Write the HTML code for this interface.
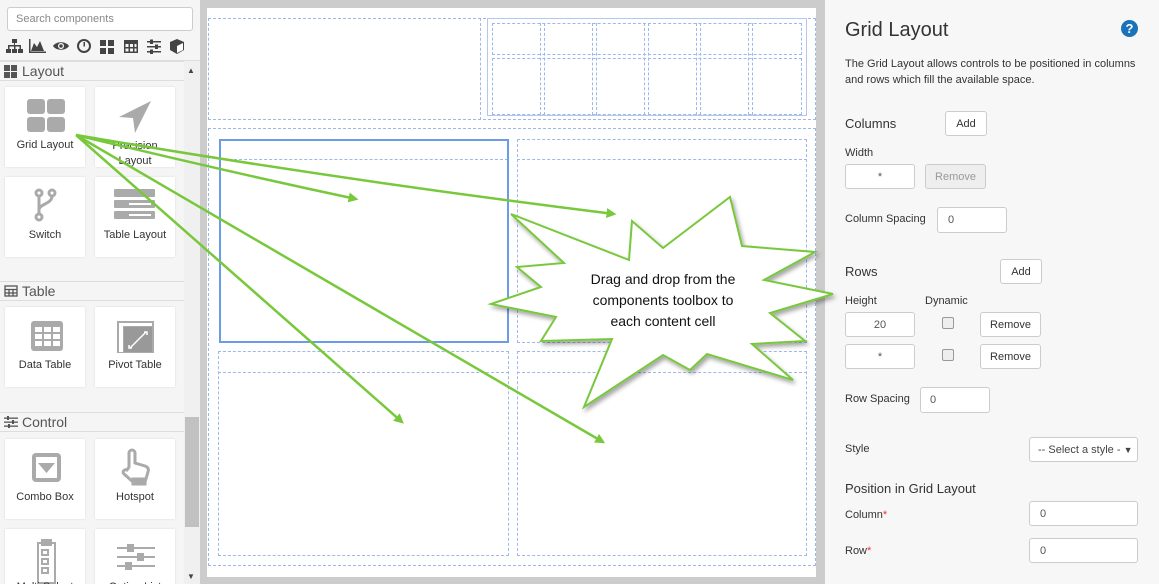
<!DOCTYPE html>
<html style="width:1159px;height:584px;overflow:hidden"><head><meta charset="utf-8"><style>
*{box-sizing:border-box;margin:0;padding:0}
body{width:1159px;height:584px;overflow:hidden;position:relative;font-family:"Liberation Sans",sans-serif;background:#f5f5f5;color:#333}
.abs{position:absolute}
.tile{position:absolute;width:80px;height:80px;background:#fff;box-shadow:0 0 2px rgba(0,0,0,.12);font-size:11px;text-align:center;color:#333;overflow:hidden}
.tile .lb{position:absolute;left:0;right:0}
.hdr{position:absolute;left:0;width:184px;height:20px;border-top:1px solid #ddd;border-bottom:1px solid #ddd;font-size:14px;color:#555;padding-left:22px;line-height:18px}
.d{position:absolute;border:1px dashed #9db8ea}
.rp{font-size:11px;color:#333}
.inp{position:absolute;background:#fff;border:1px solid #ccc;border-radius:3px;font-size:11px;color:#555;display:flex;align-items:center}
.btn{position:absolute;background:#fff;border:1px solid #ccc;border-radius:3px;font-size:11px;display:flex;align-items:center;justify-content:center;color:#333}
.cb{position:absolute;width:12px;height:12px;border:1px solid #999;border-radius:2px;background:#eee}
</style></head><body>
<!-- left panel -->
<div class="abs" style="left:7px;top:7px;width:186px;height:24px;background:#fff;border:1px solid #ccc;border-radius:3px;font-size:11px;color:#888;padding-left:8px;line-height:22px">Search components</div>
<svg class="abs" style="left:0;top:36px" width="200" height="22" fill="#444">
<rect x="12" y="3" width="5" height="4"/><rect x="14" y="7" width="1" height="3"/><rect x="8" y="9" width="13" height="1.5"/><rect x="8" y="9" width="1.5" height="4"/><rect x="14" y="9" width="1.5" height="4"/><rect x="19.5" y="9" width="1.5" height="4"/><rect x="6" y="13" width="5" height="4"/><rect x="12" y="13" width="5" height="4"/><rect x="18" y="13" width="5" height="4"/>
<path d="M29 3v14h17v-1.5H30.5V3z"/><path d="M31 15l3-8 3 4 3-6 4 10z"/>
<path d="M53 10c3-5 13-5 16 0-3 5-13 5-16 0z"/><circle cx="61" cy="10" r="3" fill="#fff"/><circle cx="61" cy="10" r="1.8"/>
<circle cx="84" cy="10" r="6" fill="none" stroke="#444" stroke-width="2"/><path d="M83.5 6h1.5v4.5h-1.5z"/>
<rect x="100" y="4" width="6" height="6"/><rect x="108" y="4" width="6" height="6"/><rect x="100" y="12" width="6" height="6"/><rect x="108" y="12" width="6" height="6"/>
<path d="M124 4h14v13h-14zM125.5 8v3h3v-3zm4.5 0v3h3v-3zm4.5 0v3h2v-3zM125.5 12.5v3h3v-3zm4.5 0v3h3v-3zm4.5 0v3h2v-3z" fill-rule="evenodd"/>
<path d="M147 5h14v1.5h-14zM147 10h14v1.5h-14zM147 15h14v1.5h-14z"/><rect x="150" y="3.5" width="3" height="4.5"/><rect x="155" y="8.5" width="3" height="4.5"/><rect x="150" y="13.5" width="3" height="4.5"/>
<path d="M177 3l7 3v8l-7 4-7-4V6z"/><path d="M177 10l6-3v7l-6 3z" fill="#fff"/>
</svg>
<div class="abs" style="left:0;top:60px;width:200px;height:1px;background:#ddd"></div>
<div class="abs" style="left:184px;top:61px;width:16px;height:523px;background:#f0f0f0"></div>
<div class="abs" style="left:185px;top:417px;width:14px;height:110px;background:#c1c1c1"></div>
<div class="abs" style="left:187px;top:66px;font-size:8px;color:#444">▲</div>
<div class="abs" style="left:187px;top:572px;font-size:8px;color:#444">▼</div>

<div class="hdr" style="top:61px">Layout</div>
<svg class="abs" style="left:4px;top:65px" width="13" height="13" fill="#555"><rect x="0" y="0" width="6" height="6"/><rect x="7" y="0" width="6" height="6"/><rect x="0" y="7" width="6" height="6"/><rect x="7" y="7" width="6" height="6"/></svg>
<div class="tile" style="left:5px;top:87px"><svg class="abs" style="left:21px;top:12px" width="40" height="34" fill="#aaa"><rect x="1" y="0" width="18" height="15" rx="3"/><rect x="21" y="0" width="18" height="15" rx="3"/><rect x="1" y="18" width="18" height="15" rx="3"/><rect x="21" y="18" width="18" height="15" rx="3"/></svg><div class="lb" style="top:52px">Grid Layout</div></div>
<div class="tile" style="left:95px;top:87px"><svg class="abs" style="left:20px;top:12px" width="40" height="36" fill="#aaa"><path d="M36 2L4 18l14 1 2 15z"/></svg><div class="lb" style="top:52px;line-height:15px">Precision<br>Layout</div></div>
<div class="tile" style="left:5px;top:177px"><svg class="abs" style="left:25px;top:10px" width="30" height="36" fill="none" stroke="#aaa" stroke-width="3"><circle cx="9" cy="6" r="3"/><circle cx="22" cy="6" r="3"/><circle cx="9" cy="30" r="3"/><path d="M9 9v18M22 9c0 8-13 8-13 14"/></svg><div class="lb" style="top:52px">Switch</div></div>
<div class="tile" style="left:95px;top:177px"><svg class="abs" style="left:19px;top:12px" width="42" height="32" fill="#aaa"><rect x="0" y="0" width="41" height="8" rx="1"/><rect x="0" y="11" width="41" height="8" rx="1"/><rect x="0" y="22" width="41" height="8" rx="1"/><rect x="15" y="14" width="22" height="2" fill="#fff"/><rect x="15" y="25" width="22" height="2" fill="#fff"/></svg><div class="lb" style="top:52px">Table Layout</div></div>

<div class="hdr" style="top:281px">Table</div>
<svg class="abs" style="left:4px;top:285px" width="14" height="12" fill="none" stroke="#555" stroke-width="1.3"><rect x="1" y="1" width="12" height="10"/><path d="M1 4.5h12M1 8h12M5 4.5v6.5M9 4.5v6.5"/></svg>
<div class="tile" style="left:5px;top:307px"><svg class="abs" style="left:21px;top:12px" width="40" height="34"><rect x="5" y="2" width="32" height="30" rx="3" fill="#aaa"/><g fill="#fff"><rect x="9" y="8" width="7" height="5"/><rect x="18" y="8" width="7" height="5"/><rect x="27" y="8" width="7" height="5"/><rect x="9" y="15" width="7" height="5"/><rect x="18" y="15" width="7" height="5"/><rect x="27" y="15" width="7" height="5"/><rect x="9" y="22" width="7" height="5"/><rect x="18" y="22" width="7" height="5"/><rect x="27" y="22" width="7" height="5"/></g></svg><div class="lb" style="top:52px">Data Table</div></div>
<div class="tile" style="left:95px;top:307px"><svg class="abs" style="left:21px;top:12px" width="40" height="34"><rect x="1" y="2" width="37" height="33" fill="#aaa"/><rect x="3" y="4" width="33" height="3" fill="#fff"/><rect x="3" y="4" width="4" height="29" fill="#fff"/><rect x="8" y="8" width="28" height="25" fill="#999"/><path d="M14 29l16-16M28 13h3v3M13 26v3h3" stroke="#fff" stroke-width="1.5" fill="none"/></svg><div class="lb" style="top:52px">Pivot Table</div></div>

<div class="hdr" style="top:412px">Control</div>
<svg class="abs" style="left:4px;top:416px" width="14" height="12" fill="#555"><rect x="0" y="1.5" width="14" height="1.3"/><rect x="0" y="5.5" width="14" height="1.3"/><rect x="0" y="9.5" width="14" height="1.3"/><rect x="3" y="0" width="2" height="4"/><rect x="8" y="4" width="2" height="4"/><rect x="4" y="8" width="2" height="4"/></svg>
<div class="tile" style="left:5px;top:439px"><svg class="abs" style="left:21px;top:12px" width="40" height="36"><rect x="6" y="2" width="29" height="29" rx="4" fill="#aaa"/><rect x="10" y="6" width="21" height="21" fill="#fff"/><path d="M12 12h17l-8.5 10z" fill="#aaa"/></svg><div class="lb" style="top:52px">Combo Box</div></div>
<div class="tile" style="left:95px;top:439px"><svg class="abs" style="left:21px;top:8px" width="40" height="40" fill="none" stroke="#aaa" stroke-width="3"><path d="M13 20V6a3 3 0 016 0v10l10 3c3 1 4 3 3 6l-3 10H17L8 27c-2-2 0-5 3-4z"/><rect x="17" y="32" width="12" height="5" fill="#aaa"/></svg><div class="lb" style="top:52px">Hotspot</div></div>
<div class="tile" style="left:5px;top:529px"><svg class="abs" style="left:28px;top:10px" width="28" height="45" fill="none" stroke="#aaa" stroke-width="2"><rect x="5" y="4" width="17" height="40"/><rect x="9" y="0" width="9" height="6" fill="#aaa"/><rect x="9" y="11" width="6" height="5"/><rect x="9" y="20" width="6" height="5"/><rect x="9" y="29" width="6" height="5"/></svg><div class="lb" style="top:52px">Multi Select</div></div>
<div class="tile" style="left:95px;top:529px"><svg class="abs" style="left:20px;top:14px" width="42" height="36" fill="#aaa"><rect x="2" y="4" width="38" height="2"/><rect x="2" y="13" width="38" height="2"/><rect x="2" y="22" width="38" height="2"/><rect x="12" y="1" width="7" height="8"/><rect x="22" y="10" width="7" height="8"/><rect x="10" y="19" width="7" height="8"/></svg><div class="lb" style="top:52px">Option List</div></div>

<!-- canvas -->
<div class="abs" style="left:200px;top:0;width:625px;height:584px;background:#cccccc"></div>
<div class="abs" style="left:207px;top:8px;width:609px;height:569px;background:#fff"></div>
<div class="d" style="left:208px;top:18px;width:608px;height:102px"></div>
<div class="d" style="left:218px;top:18px;width:263px;height:102px;border-top:none;border-bottom:none;border-left:none"></div>
<div class="abs" style="left:487px;top:18px;width:320px;height:98px;border:1px solid #b4c8ee"></div>
<div class="d" style="left:492px;top:23px;width:310px;height:32px"></div>
<div class="d" style="left:492px;top:58px;width:310px;height:57px"></div>
<div class="d" style="left:540px;top:23px;width:5px;height:92px;border-top:none;border-bottom:none"></div>
<div class="d" style="left:592px;top:23px;width:5px;height:92px;border-top:none;border-bottom:none"></div>
<div class="d" style="left:644px;top:23px;width:5px;height:92px;border-top:none;border-bottom:none"></div>
<div class="d" style="left:696px;top:23px;width:5px;height:92px;border-top:none;border-bottom:none"></div>
<div class="d" style="left:748px;top:23px;width:5px;height:92px;border-top:none;border-bottom:none"></div>
<div class="d" style="left:208px;top:128px;width:608px;height:438px"></div>
<div class="d" style="left:219px;top:159px;width:289px;height:1px;border-bottom:none;border-left:none;border-right:none"></div>
<div class="abs" style="left:219px;top:139px;width:290px;height:204px;border:2px solid #6c9be8"></div>
<div class="d" style="left:517px;top:139px;width:290px;height:204px"></div>
<div class="d" style="left:517px;top:159px;width:290px;height:1px;border-bottom:none;border-left:none;border-right:none"></div>
<div class="d" style="left:218px;top:351px;width:291px;height:205px"></div>
<div class="d" style="left:218px;top:372px;width:291px;height:1px;border-bottom:none;border-left:none;border-right:none"></div>
<div class="d" style="left:517px;top:351px;width:290px;height:205px"></div>
<div class="d" style="left:517px;top:372px;width:290px;height:1px;border-bottom:none;border-left:none;border-right:none"></div>

<!-- right panel -->
<div class="abs" style="left:825px;top:0;width:334px;height:584px;background:#f7f7f7"></div>
<div class="abs" style="left:845px;top:19px;font-size:20px;color:#333">Grid Layout</div>
<div class="abs" style="left:1121px;top:20px;width:17px;height:17px;border-radius:50%;background:#1a73ba;color:#fff;font-size:13px;font-weight:bold;text-align:center;line-height:17px">?</div>
<div class="abs rp" style="left:845px;top:56px;line-height:16px">The Grid Layout allows controls to be positioned in columns<br>and rows which fill the available space.</div>
<div class="abs" style="left:845px;top:116px;font-size:13px">Columns</div>
<div class="btn" style="left:945px;top:111px;width:42px;height:25px">Add</div>
<div class="abs rp" style="left:845px;top:147px">Width</div>
<div class="inp" style="left:845px;top:164px;width:70px;height:25px;justify-content:center">*</div>
<div class="btn" style="left:925px;top:164px;width:61px;height:25px;background:#eee;color:#999">Remove</div>
<div class="abs rp" style="left:845px;top:213px">Column Spacing</div>
<div class="inp" style="left:937px;top:207px;width:70px;height:26px;padding-left:10px">0</div>
<div class="abs" style="left:845px;top:264px;font-size:13px">Rows</div>
<div class="btn" style="left:1000px;top:259px;width:42px;height:25px">Add</div>
<div class="abs rp" style="left:845px;top:295px">Height</div>
<div class="abs rp" style="left:925px;top:295px">Dynamic</div>
<div class="inp" style="left:845px;top:312px;width:70px;height:25px;justify-content:center">20</div>
<div class="cb" style="left:942px;top:317px"></div>
<div class="btn" style="left:980px;top:312px;width:61px;height:25px">Remove</div>
<div class="inp" style="left:845px;top:344px;width:70px;height:25px;justify-content:center">*</div>
<div class="cb" style="left:942px;top:349px"></div>
<div class="btn" style="left:980px;top:344px;width:61px;height:25px">Remove</div>
<div class="abs rp" style="left:845px;top:393px">Row Spacing</div>
<div class="inp" style="left:920px;top:387px;width:70px;height:26px;padding-left:9px">0</div>
<div class="abs rp" style="left:845px;top:443px">Style</div>
<div class="inp" style="left:1029px;top:437px;width:109px;height:25px;padding-left:8px;color:#444;white-space:nowrap">-- Select a style -&nbsp;<span style="font-size:9px">▼</span></div>
<div class="abs" style="left:845px;top:481px;font-size:13px">Position in Grid Layout</div>
<div class="abs rp" style="left:845px;top:509px">Column<span style="color:#e33">*</span></div>
<div class="inp" style="left:1029px;top:501px;width:109px;height:25px;padding-left:10px">0</div>
<div class="abs rp" style="left:845px;top:545px">Row<span style="color:#e33">*</span></div>
<div class="inp" style="left:1029px;top:538px;width:109px;height:25px;padding-left:10px">0</div>

<!-- overlay -->
<svg class="abs" style="left:0;top:0" width="1159" height="584">
<defs><filter id="sh" x="-10%" y="-10%" width="130%" height="130%"><feDropShadow dx="2" dy="3" stdDeviation="2" flood-color="#000" flood-opacity="0.35"/></filter>
<marker id="ah" markerWidth="4" markerHeight="4" refX="3" refY="2" orient="auto" markerUnits="strokeWidth"><path d="M0 0L4 2 0 4z" fill="#78c83c"/></marker></defs>
<g stroke="#78c83c" stroke-width="2.5" fill="none" marker-end="url(#ah)">
<path d="M76 135Q220 170 356 199"/>
<path d="M76 135Q340 180 614 214"/>
<path d="M76 135L402 422"/>
<path d="M76 135L603 442"/>
</g>
<path filter="url(#sh)" fill="#fff" stroke="#78c83c" stroke-width="2" d="M511 214L629 260L632 221L663 248L730 197L742 246L815 252L764 280L833 294L770 313L805 341L752 344L793 380L707 354L690 370L663 355L584 407L612 339L541 341L556 317L491 304L541 287L517 267L564 263Z"/>
<text x="663" y="284" font-family="Liberation Sans,sans-serif" font-size="14" text-anchor="middle" fill="#111">Drag and drop from the</text>
<text x="663" y="305" font-family="Liberation Sans,sans-serif" font-size="14" text-anchor="middle" fill="#111">components toolbox to</text>
<text x="663" y="326" font-family="Liberation Sans,sans-serif" font-size="14" text-anchor="middle" fill="#111">each content cell</text>
</svg>
</body></html>
